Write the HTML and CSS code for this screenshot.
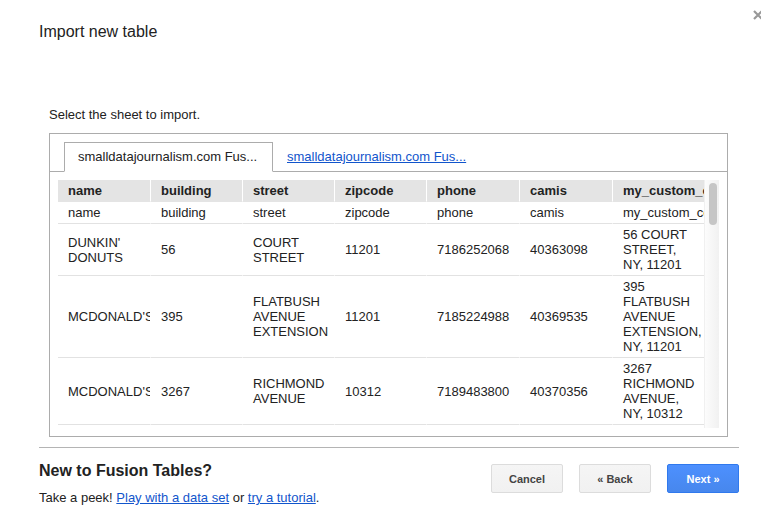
FILE: index.html
```html
<!DOCTYPE html>
<html>
<head>
<meta charset="utf-8">
<link rel="stylesheet" href="styles.css">
</head>
<body>
<div class="dialog">
  <svg class="close" width="10" height="10" viewBox="0 0 10 10"><path d="M1 1 L9 9 M9 1 L1 9" stroke="#999" stroke-width="2.2" fill="none"/></svg>
  <h1 class="title">Import new table</h1>
  <div class="content">
    <p class="prompt">Select the sheet to import.</p>
    <div class="box">
      <div class="tabs">
        <div class="tab active">smalldatajournalism.com Fus...</div>
        <div class="tab"><a href="#">smalldatajournalism.com Fus...</a></div>
      </div>
      <div class="body">
        <div class="scroller">
          <div class="clip">
            <table class="grid">
              <colgroup>
                <col class="w93"><col class="w92"><col class="w92"><col class="w92"><col class="w93"><col class="w93"><col class="last">
              </colgroup>
              <thead>
                <tr><th>name</th><th>building</th><th>street</th><th>zipcode</th><th>phone</th><th>camis</th><th>my_custom_column</th></tr>
              </thead>
              <tbody>
                <tr><td>name</td><td>building</td><td>street</td><td>zipcode</td><td>phone</td><td>camis</td><td class="nowrap">my_custom_column</td></tr>
                <tr><td>DUNKIN' DONUTS</td><td>56</td><td>COURT STREET</td><td>11201</td><td>7186252068</td><td>40363098</td><td>56 COURT STREET, NY, 11201</td></tr>
                <tr><td class="nowrap">MCDONALD'S</td><td>395</td><td>FLATBUSH AVENUE EXTENSION</td><td>11201</td><td>7185224988</td><td>40369535</td><td>395 FLATBUSH AVENUE EXTENSION, NY, 11201</td></tr>
                <tr><td class="nowrap">MCDONALD'S</td><td>3267</td><td>RICHMOND AVENUE</td><td>10312</td><td>7189483800</td><td>40370356</td><td>3267 RICHMOND AVENUE, NY, 10312</td></tr>
                <tr><td>&nbsp;</td><td></td><td></td><td></td><td></td><td></td><td></td></tr>
              </tbody>
            </table>
          </div>
          <div class="track"><div class="thumb"></div></div>
        </div>
      </div>
    </div>
  </div>
  <div class="footer">
    <div class="intro">
      <h2>New to Fusion Tables?</h2>
      <p>Take a peek! <a href="#">Play with a data set</a> or <a href="#">try a tutorial</a>.</p>
    </div>
    <div class="buttons">
      <button class="btn">Cancel</button>
      <button class="btn">« Back</button>
      <button class="btn primary">Next »</button>
    </div>
  </div>
</div>
</body>
</html>
```
FILE: styles.css
```css
html, body {
  margin: 0;
  padding: 0;
  background: #fff;
  overflow: hidden;
}
body {
  font-family: "Liberation Sans", Arial, sans-serif;
  color: #222;
  width: 761px;
  height: 522px;
}
.dialog {
  position: relative;
  padding: 22px 22px 0 39px;
}
.close {
  position: absolute;
  left: 753px;
  top: 10px;
}
.title {
  margin: 0;
  font-size: 16px;
  line-height: 20px;
  font-weight: normal;
  color: #222;
}
.content {
  margin: 65px 11px 0 10px;
}
.prompt {
  margin: 0 0 10px 0;
  font-size: 13px;
  line-height: 16px;
}
.box {
  border: 1px solid #acacac;
  padding-top: 8px;
}
.tabs {
  display: flex;
  padding-left: 14px;
  border-bottom: 1px solid #acacac;
  height: 29px;
}
.tab {
  font-size: 13px;
  line-height: 16px;
  padding: 6px 12px 6px 13px;
  border: 1px solid transparent;
  border-bottom: 1px solid transparent;
  margin-bottom: -1px;
  height: 16px;
}
.tab.active {
  width: 182px;
  border-color: #acacac;
  border-bottom-color: #fff;
  background: #fff;
  color: #222;
}
.tab a {
  color: #15c;
  text-decoration: underline;
}
.body {
  padding: 8px;
}
.scroller {
  display: flex;
  height: 248px;
}
.clip {
  width: 647px;
  overflow: hidden;
}
.grid {
  border-collapse: separate;
  border-spacing: 0;
  table-layout: fixed;
  width: 650px;
  font-size: 13px;
  line-height: 15px;
}
.grid col.w92 {
  width: 92px;
}
.grid col.w93 {
  width: 93px;
}
.grid col.last {
  width: 95px;
}
.grid th, .grid td {
  padding: 3px 10px 3px 10px;
  text-align: left;
  vertical-align: middle;
  border-right: 1px solid #fff;
  border-bottom: 1px solid #e2e2e2;
  overflow: hidden;
  color: #222;
}
.grid th {
  background: #e4e4e4;
  font-weight: bold;
  white-space: nowrap;
  border-bottom-color: #e4e4e4;
}
.grid td.nowrap {
  white-space: nowrap;
}
.grid tbody td:last-child {
  overflow: visible;
}
.track {
  border-left: 1px solid #f0f0f0;
  background: linear-gradient(to right, #fcfcfc, #f1f1f1);
  padding: 3px 3px 0 3px;
  box-sizing: border-box;
  width: 15px;
}
.thumb {
  width: 8px;
  height: 42px;
  margin-left: 1px;
  background: #c6c6c6;
  border-radius: 4px;
}
.footer {
  margin-top: 10px;
  border-top: 1px solid #b4b4b4;
  padding-top: 13px;
  display: flex;
  justify-content: space-between;
  align-items: flex-start;
}
.intro h2 {
  margin: 0;
  font-size: 16px;
  line-height: 20px;
  font-weight: bold;
  color: #222;
}
.intro p {
  margin: 9px 0 0 0;
  font-size: 13px;
  line-height: 16px;
}
.intro a {
  color: #15c;
  text-decoration: underline;
}
.buttons {
  display: flex;
  gap: 16px;
  margin-top: 3px;
}
.btn {
  width: 72px;
  height: 29px;
  box-sizing: border-box;
  border: 1px solid #dcdcdc;
  border-radius: 2px;
  background: linear-gradient(#f5f5f5, #f1f1f1);
  color: #444;
  font-family: "Liberation Sans", Arial, sans-serif;
  font-size: 11px;
  font-weight: bold;
  padding: 0;
}
.btn.primary {
  border-color: #3079ed;
  background: linear-gradient(#4d90fe, #4787ed);
  color: #fff;
}
```
